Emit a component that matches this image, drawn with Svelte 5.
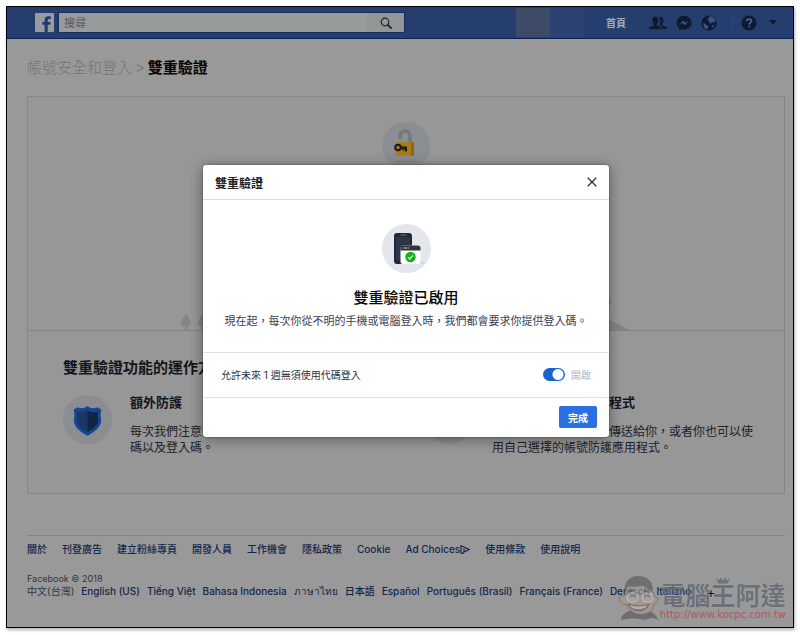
<script>
    let query = $state("")
    let remember = $state(true)
    let open = $state(true)

    const links = ["關於", "刊登廣告", "建立粉絲專頁", "開發人員", "工作機會", "隱私政策", "Cookie", "Ad Choices", "使用條款", "使用說明"]
    const languages = ["English (US)", "Tiếng Việt", "Bahasa Indonesia", "ภาษาไทย", "日本語", "Español", "Português (Brasil)", "Français (France)", "Deutsch", "Italiano"]
</script>

<div class="page">
    <header>
        <a class="logo" href="#home" aria-label="Facebook">
            <svg viewBox="0 0 19 19" width="19" height="19">
                <rect width="19" height="19" rx="1" fill="#999b9f" />
                <path d="M9.6 19v-7.2H7.4V9h2.2V7.2c0-2.5 1.4-3.9 3.8-3.9 1 0 1.8.1 2.4.2v2.4h-1.5c-1.2 0-1.6.6-1.6 1.5V9h2.9l-.4 2.8h-2.5V19z" fill="#1d3a76" />
            </svg>
        </a>
        <form class="search" onsubmit={(e) => e.preventDefault()}>
            <input type="text" placeholder="搜尋" aria-label="搜尋" bind:value={query}>
            <button aria-label="搜尋">
                <svg viewBox="0 0 12 12" width="12" height="12" fill="none" stroke="#20242c">
                    <circle cx="5" cy="5" r="3.8" stroke-width="1.2" />
                    <path d="M7.8 7.8L11 11" stroke-width="1.8" stroke-linecap="round" />
                </svg>
            </button>
        </form>
        <div class="profile"><span class="shade"></span><span class="tint"></span></div>
        <nav>
            <a class="home" href="#home">首頁</a>
            <a class="friends" href="#friends" aria-label="朋友">
                <svg viewBox="0 0 18 14" width="18" height="14" fill="#0f1a30">
                    <path d="M11.5 1c2 0 3 1.300 3 3.300 0 1.500-.5 2.700-1.200 3.500v1.300l3.300 1.400c.9.4 1.400 1 1.400 2.500h-4.800c0-1.800-.6-2.600-1.700-3.200l-1.300-.6c1-1.300 1.300-3.200.9-5.200-.2-1-.6-1.700-1-2.100.4-.6.900-.9 1.400-.9z" />
                    <path d="M6.300.5c2.100 0 3.200 1.500 3.200 3.700 0 1.600-.6 2.900-1.300 3.800v1.300l3.100 1.400c1 .4 1.500 1.100 1.500 2.800H0c0-1.700.5-2.400 1.400-2.800l3-1.400V8C3.600 7.100 3.100 5.800 3.100 4.200 3.100 2 4.200.5 6.300.5z" stroke="#263e6e" stroke-width=".5" />
                </svg>
            </a>
            <a href="#messages" aria-label="訊息">
                <svg viewBox="0 0 16 16" width="16" height="16">
                    <path d="M8 .8c4.200 0 7.500 3 7.500 6.900s-3.300 6.900-7.500 6.900c-.8 0-1.500-.1-2.200-.3L3.200 15.600v-2.500C1.500 11.800.5 9.900.5 7.700.5 3.800 3.800.8 8 .8z" fill="#0f1a30" />
                    <path d="M3.200 9.900L7 5.800l2.200 2 3.500-2-3.800 4.100-2.200-2z" fill="#3b568c" />
                </svg>
            </a>
            <a class="globe" href="#notifications" aria-label="通知">
                <svg viewBox="0 0 16 16" width="16" height="16">
                    <circle cx="8" cy="8" r="7.600" fill="#0f1a30" />
                    <path d="M8.500 1.100c3 .2 5.400 2.200 6.100 4.900l-1.500 1.700-2-.4-1.400 1.500-1.600-1 .2-1.600L6.500 5l.3-1.600 1.500-.5zM2.200 7.900l2 .6 1.700 1.900 1.900.5-.8 1.800-1.500 1.700C3.500 13.500 2 11 2.200 7.900zM11 10.500l2.300-.7c-.4 1.500-1.300 2.700-2.600 3.500z" fill="#3a5384" />
                </svg>
            </a>
            <a class="help" href="#help" aria-label="說明">
                <svg viewBox="0 0 16 16" width="16" height="16">
                    <circle cx="8" cy="8" r="7.500" fill="#0f1a30" />
                    <path d="M5.700 6.300c0-1.400 1-2.200 2.400-2.200s2.300.8 2.300 2c0 1.600-2.100 1.700-2.100 3.300" fill="none" stroke="#47639b" stroke-width="1.700" />
                    <rect x="7.400" y="10.600" width="1.800" height="1.800" fill="#47639b" />
                </svg>
            </a>
            <a class="more" href="#more" aria-label="更多">
                <svg viewBox="0 0 8 5" width="8" height="5"><path d="M0 0h8L4 5z" fill="#0f1a30" /></svg>
            </a>
        </nav>
    </header>

    <main>
        <h1><a href="#security">帳號安全和登入</a><span>&gt;</span><b>雙重驗證</b></h1>

        <div class="card">
            <section class="hero">
                <svg class="lock" viewBox="0 0 48 48" width="48" height="48">
                    <circle cx="24" cy="24" r="24" fill="#8a8d91" />
                    <path d="M18 17v-3a5 5 0 0 1 10 0V20" fill="none" stroke="#74777b" stroke-width="3.500" />
                    <rect x="14" y="20" width="18" height="14" rx="2" fill="#a87d16" />
                    <path d="M29 20h1a2 2 0 0 1 2 2v10a2 2 0 0 1-2 2h-1z" fill="#8f6a11" />
                    <circle cx="16" cy="25.500" r="2.800" fill="none" stroke="#141b24" stroke-width="2" />
                    <path d="M19 25.500h5v4M21.500 25.500v3" fill="none" stroke="#141b24" stroke-width="2" />
                    <path d="M14 39.500h18" stroke="#797c80" />
                </svg>
                <svg class="scene" viewBox="0 0 460 40" width="460" height="40">
                    <g fill="#828487">
                        <path d="M10 24c2.500 3 5 6.500 5 9 0 2.300-1.600 3.600-4 3.800V40H9v-3.200C6.600 36.600 5 35.300 5 33c0-2.500 2.500-6 5-9z" />
                        <path d="M27 24c2.500 3 5 6.500 5 9 0 2.300-1.600 3.600-4 3.800V40h-2v-3.200c-2.400-.2-4-1.500-4-3.800 0-2.500 2.500-6 5-9z" />
                        <circle cx="431" cy="12" r="4" />
                        <path d="M380 40l30-14q10-4 22 3l22 11z" />
                    </g>
                </svg>
            </section>
            <section class="info">
                <h2>雙重驗證功能的運作方式</h2>
                <div class="columns">
                    <article>
                        <svg viewBox="0 0 49 49" width="49" height="49">
                            <circle cx="24.500" cy="24.500" r="24.500" fill="#8a8d91" />
                            <path d="M24.500 11c3 2.400 6.500 2.900 10 1.200l4 2.500c-1 3-1 5.500-.5 9 .8 6-3 11.500-13.500 17C14 35.200 10.200 29.700 11 23.700c.5-3.500.5-6-.5-9l4-2.500c3.500 1.700 7 1.200 10-1.200z" fill="#17468f" />
                            <path d="M24.500 15v22C16 32.500 13.300 28.500 13.900 23.500c.3-3 .3-5-.2-7.200 4 1.500 7.500 1.200 10.800-1.300z" fill="#1b3564" />
                            <path d="M24.500 15v22c8.500-4.500 11.200-8.500 10.600-13.500-.3-3-.3-5 .2-7.200-4 1.500-7.500 1.200-10.800-1.300z" fill="#122545" />
                        </svg>
                        <div>
                            <h3>額外防護</h3>
                            <p>每次我們注意到有不明的裝置嘗試登入時，會要求密<br>碼以及登入碼。</p>
                        </div>
                    </article>
                    <article>
                        <svg viewBox="0 0 49 49" width="49" height="49">
                            <circle cx="24.500" cy="24.500" r="24.500" fill="#8a8d91" />
                        </svg>
                        <div>
                            <h3>使用簡訊或驗證應用程式</h3>
                            <p>可透過 SMS 將登入碼傳送給你，或者你也可以使<br>用自己選擇的帳號防護應用程式。</p>
                        </div>
                    </article>
                </div>
            </section>
        </div>

        <footer>
            <ul class="links">
                {#each links as link}
                    <li>
                        <a href="#footer">{link}{#if link == "Ad Choices"}<svg viewBox="0 0 10 9" width="10" height="9" fill="none" stroke="#14264d"><path d="M4 8.200H1V.8L9 4.500 4 7V3.600" stroke-width="1.200" /></svg>{/if}</a>
                    </li>
                {/each}
            </ul>
            <p>Facebook © 2018</p>
            <ul class="languages">
                <li>中文(台灣)</li>
                {#each languages as language}
                    <li><a href="#language">{language}</a></li>
                {/each}
                <li><button class="plus" aria-label="更多語言">+</button></li>
            </ul>
        </footer>
    </main>

    <div class="watermark">
        <svg viewBox="0 0 42 46" width="42" height="46">
            <path d="M3 45c0-5 4-7 8-9l18 0c7 1 10 5 11 9-5-3-9-2-13 0-8-2-17-2-24 0z" fill="#55565a" />
            <path d="M6 21c-4-1-6 2-4 5s3 4 6 3c3 8 10 11 18 10 6-1 10-5 10-10 3-1 5-5 3-7-1-1-2-1-3 0L33 10 9 11z" fill="#a8968c" stroke="#68686a" />
            <path d="M7 18C5 8 11 1 20 1s14 5 15 13l-2 3c-2-3-5-5-8-6-6 1-11 1-15 0z" fill="#58595c" />
            <path d="M10 17l6-2M26 16l6 2" stroke="#555" stroke-width="1.500" />
            <rect x="9" y="18" width="11" height="9" rx="4" fill="#a9a6a4" stroke="#d0cecc" />
            <rect x="24" y="18" width="11" height="9" rx="4" fill="#a9a6a4" stroke="#d0cecc" />
            <path d="M12 22q3-3 6 0M26 22q3-3 6 0" fill="none" stroke="#555" />
            <path d="M10 29q12 4 21 0c-2 8-17 10-21 0z" fill="#a05e5e" stroke="#5f4f4f" />
            <path d="M12 30q9 3 17 0l-2 3q-7 2-13 0z" fill="#c2c0be" />
        </svg>
        <div>
            <svg class="crown" viewBox="0 0 18 10" width="18" height="10"><path d="M1 2l4 3 1-4 3 4 3-4 1 4 4-3-3 7H4z" fill="#56616c" stroke="#adb0b3" stroke-width=".6" /></svg>
            <strong>電腦王阿達</strong>
            <span>http://www.kocpc.com.tw</span>
        </div>
    </div>

    {#if open}
        <div class="overlay">
            <div class="modal" role="dialog" aria-labelledby="modal_title">
                <div class="modal_head">
                    <h2 id="modal_title">雙重驗證</h2>
                    <button class="close" aria-label="關閉" onclick={() => open = false}>
                        <svg viewBox="0 0 10 10" width="10" height="10"><path d="M.7.7l8.600 8.600M9.300.7L.7 9.300" stroke="#2a3140" stroke-width="1.300" /></svg>
                    </button>
                </div>
                <div class="modal_body">
                    <svg viewBox="0 0 49 49" width="49" height="49">
                        <circle cx="24.500" cy="24.500" r="24.500" fill="#e4e6eb" />
                        <rect x="12" y="9" width="18" height="31" rx="3" fill="#20283a" />
                        <rect x="14" y="13" width="14" height="23" fill="#2d3548" />
                        <path d="M18.500 11h6" stroke="#6d7486" />
                        <path d="M21 40h22l-4-4H21z" fill="#d3d6dc" />
                        <rect x="18.500" y="21.500" width="20" height="18.500" rx="2.500" fill="#fff" />
                        <path d="M18.500 26.500V24a2.500 2.500 0 0 1 2.500-2.500H36a2.500 2.500 0 0 1 2.500 2.500v2.500z" fill="#2b3346" />
                        <circle cx="21.500" cy="24" r="1" fill="#31a24c" />
                        <circle cx="24" cy="24" r="1" fill="#e8a33a" />
                        <circle cx="26.500" cy="24" r="1" fill="#e5503f" />
                        <circle cx="28.500" cy="33" r="5.200" fill="#17b01b" />
                        <path d="M26 33.200l1.800 1.800 3.200-3.600" fill="none" stroke="#d6f5d6" stroke-width="1.300" />
                    </svg>
                    <h3>雙重驗證已啟用</h3>
                    <p>現在起，每次你從不明的手機或電腦登入時，我們都會要求你提供登入碼。</p>
                </div>
                <div class="modal_option">
                    <label for="remember">允許未來 1 週無須使用代碼登入</label>
                    <input type="checkbox" id="remember" bind:checked={remember}>
                    <span>開啟</span>
                </div>
                <div class="modal_foot">
                    <button class="done" onclick={() => open = false}>完成</button>
                </div>
            </div>
        </div>
    {/if}
</div>

<style>
    :global(body){
        background-color: #fff;
    }

    .page{
        position: relative;
        box-sizing: border-box;
        min-height: calc(100vh - 13px);
        margin: 6px 6px 7px;
        border: 1px solid #000;
        background-color: #999;
        box-shadow: 1px 2px 3px rgba(0, 0, 0, 0.3);
        color: #12151b;
        font-family: Inter, "Noto Sans CJK TC", sans-serif;
        font-size: 10px;
        overflow: hidden;
    }

    h1, h2, h3, p, ul{
        margin: 0;
        padding: 0;
    }

    a{
        color: inherit;
        text-decoration: none;
    }

    svg{
        display: block;
        flex-shrink: 0;
    }

    button, input{
        font-family: inherit;
        padding: 0;
        border: none;
    }

    header{
        display: flex;
        align-items: center;
        height: 31px;
        padding: 0 16px 0 28px;
        background-color: #263e6e;
        border-bottom: 1px solid #0b2459;
    }

    .search{
        display: flex;
        flex: 0 1 345px;
        height: 19px;
        margin-left: 5px;
        background-color: #999a9c;
        box-shadow: 0 0 0 1px #172f63;
    }

    .search input{
        flex: 1;
        min-width: 0;
        padding-left: 5px;
        background: none;
        font-size: 11px;
        color: #222;
    }

    .search input::placeholder{
        color: #55585e;
    }

    .search button{
        display: grid;
        place-items: center;
        width: 37px;
        background-color: #949597;
    }

    .profile{
        display: flex;
        align-self: stretch;
        margin: 1px auto 1px 112px;
    }

    .shade{
        width: 34px;
        background-color: #3d4b69;
    }

    .tint{
        width: 34px;
        background-color: #2c4273;
    }

    nav{
        display: flex;
        align-items: center;
        gap: 9px;
    }

    .home{
        margin-right: 14px;
        color: #a3abbc;
        font-weight: bold;
    }

    .help{
        margin-left: 6px;
        padding-left: 8px;
        border-left: 1px solid #2c4679;
    }

    .more{
        margin-left: 3px;
    }

    main{
        padding: 0 8px 0 20px;
    }

    h1{
        padding: 18px 0;
        font-size: 15px;
        line-height: 21px;
        font-weight: normal;
        color: #717377;
    }

    h1 b{
        color: #050506;
    }

    h1 span{
        margin: 0 3px;
    }

    h1 a, h1 span{
        font-weight: 300;
    }

    .card{
        border: 1px solid #84868a;
        background-color: #979797;
    }

    .hero{
        display: flex;
        flex-direction: column;
        align-items: center;
        justify-content: space-between;
        min-height: 208px;
        padding-top: 25px;
        border-bottom: 1px solid #808387;
    }

    .info{
        padding: 26px 35px 37px;
    }

    .info h2{
        font-size: 15px;
        line-height: 22px;
    }

    .columns{
        display: grid;
        grid-template-columns: 1fr 1fr;
        gap: 38px;
        margin-top: 13px;
    }

    article{
        display: flex;
        gap: 18px;
        min-width: 0;
    }

    article svg{
        margin-top: 3px;
    }

    article h3{
        font-size: 13px;
        line-height: 20px;
    }

    article p{
        margin-top: 12px;
        font-size: 12px;
        line-height: 16px;
        color: #1c2028;
        white-space: nowrap;
    }

    footer{
        margin-top: 41px;
        padding-top: 7px;
        border-top: 1px solid #808287;
        line-height: 13px;
        color: #33363c;
    }

    footer p{
        font-size: 9px;
    }

    footer ul{
        display: flex;
        flex-wrap: wrap;
        list-style: none;
    }

    footer a{
        display: flex;
        align-items: center;
        color: #14264d;
        font-weight: 500;
    }

    .links{
        gap: 0 15px;
        margin-bottom: 16px;
    }

    .languages{
        gap: 0 7px;
    }

    .plus{
        margin-left: 8px;
        background: none;
        color: #111a30;
        font-size: 14px;
        line-height: 13px;
    }

    .watermark{
        position: absolute;
        right: 7px;
        bottom: 6px;
        display: flex;
        align-items: flex-end;
        opacity: 0.65;
    }

    .watermark div{
        display: flex;
        flex-direction: column;
        align-items: center;
    }

    .crown{
        margin-bottom: -2px;
    }

    .watermark strong{
        font-size: 25px;
        line-height: 26px;
        color: #555d68;
        text-shadow: 0 0 1px #c4c6c8;
    }

    .watermark span{
        font-size: 10px;
        line-height: 12px;
        color: #c0303f;
        font-family: "DejaVu Sans", sans-serif;
    }

    .overlay{
        position: absolute;
        inset: 0;
        display: flex;
        justify-content: center;
        align-items: flex-start;
        padding: 158px 8px 0 20px;
    }

    .modal{
        flex: 0 1 406px;
        border-radius: 3px;
        background-color: #fff;
        box-shadow: 0 2px 14px rgba(0, 0, 0, 0.4), 0 0 2px rgba(0, 0, 0, 0.5);
    }

    .modal_head{
        display: flex;
        align-items: center;
        justify-content: space-between;
        height: 34px;
        padding: 0 12px;
        border-bottom: 1px solid #dadde1;
    }

    .modal_head h2{
        font-size: 12px;
        color: #1c1e21;
    }

    .close{
        background: none;
    }

    .modal_body{
        display: flex;
        flex-direction: column;
        align-items: center;
        padding: 24px 10px 22px;
    }

    .modal_body h3{
        margin-top: 13px;
        font-size: 15px;
        line-height: 24px;
        font-weight: 500;
        color: #050505;
    }

    .modal_body p{
        margin-top: 2px;
        font-size: 11px;
        line-height: 18px;
        color: #3a4050;
    }

    .modal_option{
        display: flex;
        align-items: center;
        height: 42px;
        padding: 0 18px 2px;
        border: 1px solid #dfe1e5;
        border-width: 1px 0;
        color: #b3b7bf;
    }

    .modal_option label{
        margin-right: auto;
        color: #2a3040;
    }

    .modal_option input{
        appearance: none;
        width: 22px;
        height: 13px;
        margin: 0 6px 0 0;
        border-radius: 7px;
        background: radial-gradient(circle at 15px 50%, #fff 5px, #1763cf 6px);
    }

    .modal_option input:not(:checked){
        background: radial-gradient(circle at 7px 50%, #fff 5px, #bec3c9 6px);
    }

    .modal_foot{
        display: flex;
        justify-content: flex-end;
        padding: 8px 12px 9px;
    }

    .done{
        width: 38px;
        height: 22px;
        border-radius: 2px;
        background-color: #2a70e3;
        color: #fff;
        font-size: 10px;
        font-weight: bold;
    }
</style>
